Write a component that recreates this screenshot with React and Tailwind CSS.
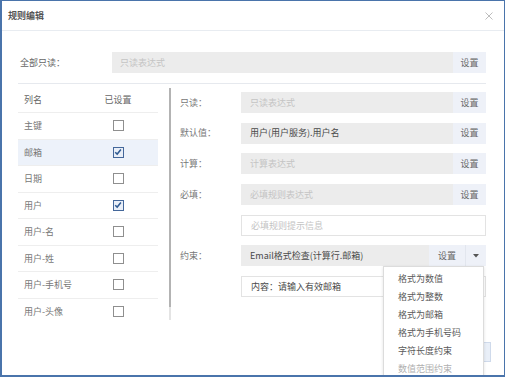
import React from "react";

const font = { fontFamily: '"Noto Sans CJK SC", "Noto Sans", sans-serif' };

function Check({ checked }) {
  if (checked) {
    return (
      <div className="w-[11px] h-[11px] border border-[#44679a] bg-[#e9eff8] flex items-center justify-center">
        <svg width="8" height="8" viewBox="0 0 8 8">
          <path d="M1.2 4.2 L3.2 6.1 L6.9 1.6" fill="none" stroke="#2f5a92" strokeWidth="1.5" />
        </svg>
      </div>
    );
  }
  return <div className="w-[11px] h-[11px] border border-[#8f8f8f] bg-white" />;
}

function FieldRow({ label, placeholder, value, white, noBtn, children }) {
  return (
    <div className="flex items-center h-[21px]">
      <div className="w-[61px] text-[9px] text-[#777]">{label}</div>
      {children ? (
        children
      ) : (
        <>
          <div
            className={
              "flex-1 h-[21px] flex items-center pl-[9px] text-[9px] " +
              (white ? "bg-white border border-[#e3e3e3] " : "bg-[#ececec] ") +
              (value ? "text-[#4a4a4a]" : "text-[#c4c4c4]")
            }
          >
            {value || placeholder}
          </div>
          {!noBtn && (
            <div className="w-[33px] h-[21px] bg-[#eef1f8] flex items-center justify-center text-[9px] text-[#666]">
              设置
            </div>
          )}
        </>
      )}
    </div>
  );
}

export default function App() {
  const rows = [
    ["主键", false],
    ["邮箱", true],
    ["日期", false],
    ["用户", true],
    ["用户-名", false],
    ["用户-姓", false],
    ["用户-手机号", false],
    ["用户-头像", false],
  ];
  const menu = ["格式为数值", "格式为整数", "格式为邮箱", "格式为手机号码", "字符长度约束", "数值范围约束"];
  return (
    <div
      style={font}
      className="relative w-[505px] h-[377px] overflow-hidden bg-white border border-[#4a74ab] border-l-2 border-b-2"
    >
      {/* header */}
      <div className="h-[30px] border-b border-[#e8ecf1] flex items-center justify-between pl-[6px] pr-[11px]">
        <span className="text-[9px] font-bold text-[#555]">规则编辑</span>
        <svg width="8" height="8" viewBox="0 0 8 8">
          <path d="M0.5 0.5 L7.5 7.5 M7.5 0.5 L0.5 7.5" stroke="#b5b5b5" strokeWidth="0.9" />
        </svg>
      </div>

      {/* body */}
      <div className="pl-[16px] pr-[18px]">
        <div className="mt-[21px] flex items-center h-[21px]">
          <div className="w-[94px] pl-[2px] text-[9px] text-[#666]">全部只读：</div>
          <div className="flex-1 h-[21px] bg-[#ececec] flex items-center pl-[8px] text-[9px] text-[#c4c4c4]">
            只读表达式
          </div>
          <div className="w-[33px] h-[21px] bg-[#eef1f8] flex items-center justify-center text-[9px] text-[#666]">
            设置
          </div>
        </div>
        <div className="mt-[10px] h-px bg-[#e6e9ee]" />

        <div className="flex">
          {/* left table */}
          <div className="w-[140px] pt-[4px]">
            <div className="h-[25px] flex items-center border-b border-[#eeeeee] text-[9px] text-[#666]">
              <div className="w-[78px] pl-[6px]">列名</div>
              <div className="w-[44px] text-center">已设置</div>
            </div>
            {rows.map(([name, checked], i) => (
              <div
                key={name}
                className={
                  "h-[26.5px] flex items-center text-[9px] text-[#777] " +
                  (i < rows.length - 1 ? "border-b border-[#eeeeee] " : "") +
                  (name === "邮箱" ? "bg-[#edf2fa]" : "")
                }
              >
                <div className="w-[78px] pl-[6px]">{name}</div>
                <div className="w-[44px] flex justify-center">
                  <Check checked={checked} />
                </div>
              </div>
            ))}
          </div>

          {/* splitter */}
          <div className="ml-[11px] pt-[4px] flex flex-col">
            <div className="w-[2px] h-[219px] bg-[#b3b3b3]" />
            <div className="w-[2px] h-[13px] bg-[#e4e4e4]" />
          </div>

          {/* right form */}
          <div className="flex-1 ml-[9px] pt-[8px] flex flex-col gap-[9.7px]">
            <FieldRow label="只读：" placeholder="只读表达式" />
            <FieldRow label="默认值：" value="用户(用户服务).用户名" />
            <FieldRow label="计算：" placeholder="计算表达式" />
            <FieldRow label="必填：" placeholder="必填规则表达式" />
            <FieldRow label="" placeholder="必填规则提示信息" white noBtn />
            <FieldRow label="约束：">
              <div className="flex-1 h-[21px] bg-[#ececec] flex items-center pl-[9px] text-[9px] text-[#4a4a4a]">
                Email格式检查(计算行.邮箱)
              </div>
              <div className="w-[36px] h-[21px] bg-[#eef1f8] flex items-center justify-center text-[9px] text-[#666]">
                设置
              </div>
              <div className="w-[21px] h-[21px] bg-[#eef1f8] border-l border-[#e2e6ee] flex items-center justify-center">
                <svg width="6" height="4" viewBox="0 0 6 4">
                  <path d="M0 0 L6 0 L3 3.5 Z" fill="#555" />
                </svg>
              </div>
            </FieldRow>
            <FieldRow label="" value="内容：请输入有效邮箱" white noBtn />
          </div>
        </div>

        {/* footer */}
        <div className="mt-[17px] flex justify-end -mr-[5px]">
          <div className="w-[40px] h-[20px] bg-[#e9eff8] border border-[#cfdaeb] flex items-center justify-center text-[9px] text-[#333]">
            确定
          </div>
        </div>
      </div>

      {/* dropdown */}
      <div className="absolute left-[381px] top-[265px] w-[101px] pt-[3px] pb-[4px] bg-white border border-[#dcdcdc] shadow-[0_1px_3px_rgba(0,0,0,0.12)] z-10">
        {menu.map((m, i) => (
          <div
            key={m}
            className={
              "h-[18px] flex items-center pl-[14px] text-[9px] " +
              (i === menu.length - 1 ? "text-[#b0b0b0]" : "text-[#5a5a5a]")
            }
          >
            {m}
          </div>
        ))}
      </div>
    </div>
  );
}
